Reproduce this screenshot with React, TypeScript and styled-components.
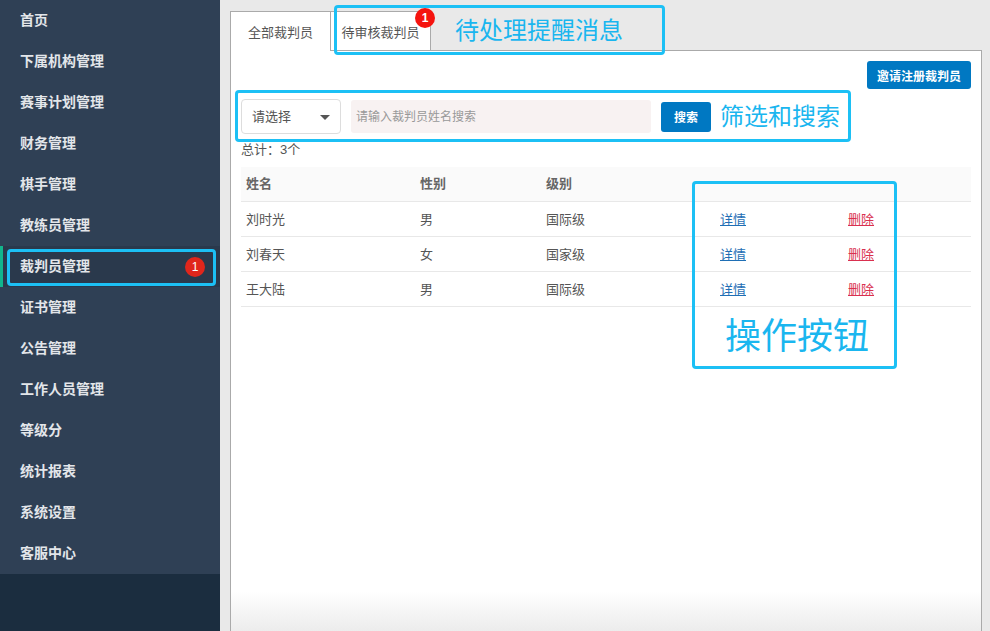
import React from 'react';
import styled, { createGlobalStyle } from 'styled-components';

const GlobalStyle = createGlobalStyle`
  html, body {
    margin: 0;
    height: 100%;
    overflow: hidden;
  }
  body {
    font-family: "Liberation Sans", "Noto Sans CJK SC", sans-serif;
    background: #e9e9e9;
  }
`;

const Page = styled.div`
  position: relative;
  display: flex;
  width: 990px;
  height: 631px;
  overflow: hidden;
`;

const Sidebar = styled.nav`
  width: 220px;
  flex-shrink: 0;
  background: #1b2d3f;
`;

const NavList = styled.ul`
  list-style: none;
  margin: 0;
  padding: 0;
  background: #2f4055;
`;

const NavItem = styled.li<{ $active?: boolean }>`
  display: flex;
  align-items: center;
  justify-content: space-between;
  height: 41px;
  padding: 0 15px 0 ${props => (props.$active ? '17px' : '20px')};
  font-size: 14px;
  font-weight: 700;
  color: #e3e6ea;
  background: ${props => (props.$active ? '#2a394c' : 'transparent')};
  border-left: ${props => (props.$active ? '3px solid #12b58d' : 'none')};
`;

const NavLabel = styled.span`
  margin-bottom: 4px;
`;

const NavBadge = styled.span`
  display: flex;
  align-items: center;
  justify-content: center;
  width: 20px;
  height: 20px;
  border-radius: 50%;
  background: #e0261c;
  color: #fff;
  font-size: 12px;
  font-weight: 400;
`;

const Main = styled.main`
  flex: 1;
  display: flex;
  flex-direction: column;
  padding: 11px 8px 0 10px;
`;

const Tabs = styled.div`
  display: flex;
  height: 40px;
  box-sizing: border-box;
  border-bottom: 1px solid #aaa;
`;

const Tab = styled.div<{ $active?: boolean }>`
  position: relative;
  display: flex;
  align-items: center;
  justify-content: center;
  box-sizing: border-box;
  width: ${props => (props.$active ? '101px' : '100px')};
  height: 40px;
  background: #fff;
  border: 1px solid #aaa;
  border-left: ${props => (props.$active ? '1px solid #aaa' : 'none')};
  border-bottom: ${props => (props.$active ? 'none' : '1px solid #aaa')};
  font-size: 13px;
  color: #555;
`;

const TabBadge = styled.span`
  position: absolute;
  top: -4px;
  right: -5px;
  display: flex;
  align-items: center;
  justify-content: center;
  width: 20px;
  height: 20px;
  border-radius: 50%;
  background: #f5140f;
  color: #fff;
  font-size: 12px;
  font-weight: 700;
`;

const Panel = styled.section`
  flex: 1;
  display: flex;
  flex-direction: column;
  padding: 10px 10px 0 10px;
  background: linear-gradient(to bottom, #fff 0, #fff 540px, #ececec 100%);
  border-left: 1px solid #aaa;
  border-right: 1px solid #aaa;
`;

const TopActions = styled.div`
  display: flex;
  justify-content: flex-end;
`;

const InviteButton = styled.button`
  width: 104px;
  height: 28px;
  padding: 0;
  border: none;
  border-radius: 3px;
  background: #0078c2;
  color: #fff;
  font: 700 12px "Liberation Sans", "Noto Sans CJK SC", sans-serif;
`;

const FilterRow = styled.div`
  display: flex;
  align-items: center;
  gap: 10px;
  margin-top: 10px;
  height: 35px;
`;

const SelectBox = styled.div`
  position: relative;
  display: flex;
  align-items: center;
  box-sizing: border-box;
  width: 100px;
  height: 35px;
  padding: 0 0 2px 10px;
  background: #fff;
  border: 1px solid #ddd;
  border-radius: 4px;
  font-size: 13px;
  color: #555;

  &::after {
    content: '';
    position: absolute;
    right: 10px;
    top: 15px;
    border-left: 5px solid transparent;
    border-right: 5px solid transparent;
    border-top: 5px solid #555;
  }
`;

const SearchInput = styled.input`
  box-sizing: border-box;
  width: 300px;
  height: 33px;
  padding: 0 5px;
  border: none;
  border-radius: 3px;
  background: #f8f2f2;
  font: 12px "Liberation Sans", "Noto Sans CJK SC", sans-serif;

  &::placeholder {
    color: #999;
    opacity: 1;
  }
`;

const SearchButton = styled.button`
  width: 50px;
  height: 30px;
  padding: 0;
  border: none;
  border-radius: 3px;
  background: #0078c2;
  color: #fff;
  font: 700 12px "Liberation Sans", "Noto Sans CJK SC", sans-serif;
`;

const Total = styled.div`
  height: 18px;
  margin-top: 7px;
  font-size: 13px;
  line-height: 18px;
  color: #555;
`;

const Table = styled.div`
  margin-top: 8px;
`;

const Row = styled.div<{ $head?: boolean }>`
  display: grid;
  grid-template-columns: 174px 126px 174px 128px 128px;
  align-items: center;
  box-sizing: border-box;
  height: 35px;
  padding-bottom: ${props => (props.$head ? '3px' : '2px')};
  background: ${props => (props.$head ? '#fafafa' : 'transparent')};
  border-bottom: 1px solid #e8e8e8;
  font-size: 13px;
  font-weight: ${props => (props.$head ? 700 : 400)};
  color: ${props => (props.$head ? '#666' : '#555')};
`;

const Cell = styled.div`
  padding-left: 5px;
`;

const ActionLink = styled.a<{ $danger?: boolean }>`
  padding-left: 5px;
  font-size: 13px;
  text-decoration: underline;
  color: ${props => (props.$danger ? '#d9304f' : '#1f6fb5')};
`;

// The blue callouts drawn on top of the screenshot
const Callout = styled.div<{ $x: number; $y: number; $w: number; $h: number }>`
  position: absolute;
  left: ${props => props.$x}px;
  top: ${props => props.$y}px;
  width: ${props => props.$w}px;
  height: ${props => props.$h}px;
  box-sizing: border-box;
  border: 3px solid #1cc0f5;
  border-radius: 4px;
  pointer-events: none;
`;

const CalloutText = styled.div<{ $x: number; $y: number; $size: number }>`
  position: absolute;
  left: ${props => props.$x}px;
  top: ${props => props.$y}px;
  font-size: ${props => props.$size}px;
  line-height: 1;
  white-space: nowrap;
  color: #1ab6ef;
  font-family: "Noto Sans CJK SC", sans-serif;
  font-weight: 400;
`;

const navItems = [
  '首页',
  '下属机构管理',
  '赛事计划管理',
  '财务管理',
  '棋手管理',
  '教练员管理',
  '裁判员管理',
  '证书管理',
  '公告管理',
  '工作人员管理',
  '等级分',
  '统计报表',
  '系统设置',
  '客服中心',
];

const referees = [
  { name: '刘时光', gender: '男', level: '国际级' },
  { name: '刘春天', gender: '女', level: '国家级' },
  { name: '王大陆', gender: '男', level: '国际级' },
];

const App: React.FC = () => {
  return (
    <Page>
      <GlobalStyle />
      <Sidebar>
        <NavList>
          {navItems.map(item => (
            <NavItem key={item} $active={item === '裁判员管理'}>
              <NavLabel>{item}</NavLabel>
              {item === '裁判员管理' && <NavBadge>1</NavBadge>}
            </NavItem>
          ))}
        </NavList>
      </Sidebar>

      <Main>
        <Tabs>
          <Tab $active>全部裁判员</Tab>
          <Tab>
            待审核裁判员
            <TabBadge>1</TabBadge>
          </Tab>
        </Tabs>
        <Panel>
          <TopActions>
            <InviteButton>邀请注册裁判员</InviteButton>
          </TopActions>
          <FilterRow>
            <SelectBox>请选择</SelectBox>
            <SearchInput placeholder="请输入裁判员姓名搜索" />
            <SearchButton>搜索</SearchButton>
          </FilterRow>
          <Total>总计：3个</Total>
          <Table>
            <Row $head>
              <Cell>姓名</Cell>
              <Cell>性别</Cell>
              <Cell>级别</Cell>
              <Cell />
              <Cell />
            </Row>
            {referees.map(r => (
              <Row key={r.name}>
                <Cell>{r.name}</Cell>
                <Cell>{r.gender}</Cell>
                <Cell>{r.level}</Cell>
                <ActionLink>详情</ActionLink>
                <ActionLink $danger>删除</ActionLink>
              </Row>
            ))}
          </Table>
        </Panel>
      </Main>

      <Callout $x={334} $y={5} $w={331} $h={50} />
      <CalloutText $x={455} $y={17} $size={24}>待处理提醒消息</CalloutText>
      <Callout $x={235} $y={90} $w={616} $h={52} />
      <CalloutText $x={720} $y={103} $size={24}>筛选和搜索</CalloutText>
      <Callout $x={692} $y={181} $w={205} $h={188} />
      <CalloutText $x={725} $y={315} $size={36}>操作按钮</CalloutText>
      <Callout $x={7} $y={249} $w={209} $h={37} />
    </Page>
  );
};

export default App;
